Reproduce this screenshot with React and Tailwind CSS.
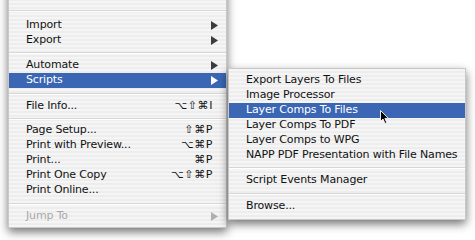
import React from "react";

const stripe =
  "bg-[repeating-linear-gradient(180deg,#f5f5f5_0px,#f5f5f5_2px,#ededed_2px,#ededed_4px)]";

function Arrow({ color = "#3c3c3c" }) {
  return (
    <svg width="7" height="9" viewBox="0 0 7 9" className="block">
      <polygon points="0,0 7,4.5 0,9" fill={color} />
    </svg>
  );
}

function Row({ label, shortcut, arrow, active, disabled, pl = "pl-[17px]", pr = "pr-[8px]" }) {
  const color = active ? "text-white" : disabled ? "text-[#a8a8a8]" : "text-[#111]";
  return (
    <div
      className={`h-[15px] flex items-center ${pl} ${pr} ${color} ${
        active ? "bg-[#3a66b4]" : ""
      }`}
    >
      <span className="flex-1 whitespace-nowrap">{label}</span>
      {shortcut && <span className="whitespace-nowrap tracking-[0.6px]">{shortcut}</span>}
      {arrow && (
        <Arrow color={active ? "#ffffff" : disabled ? "#b0b0b0" : "#3c3c3c"} />
      )}
    </div>
  );
}

function Sep({ h = "h-[10px]" }) {
  return (
    <div className={`${h} flex items-center`}>
      <div className="w-full h-px bg-[#d6d6d6] border-b border-white box-content" />
    </div>
  );
}

export default function App() {
  return (
    <div
      className="relative w-[475px] h-[240px] overflow-hidden bg-white text-[11px] tracking-[-0.15px]"
      style={{ fontFamily: '"DejaVu Sans", "Liberation Sans", sans-serif' }}
    >
      <div
        className={`ml-[8px] mt-[-16px] w-[219px] pt-[4px] pb-[3px] ${stripe} border border-[#c8c8c8] shadow-[0_4px_9px_rgba(0,0,0,0.55)]`}
      >
        <Row label="Place..." disabled />
        <Sep h="h-[14px]" />
        <Row label="Import" arrow />
        <Row label="Export" arrow />
        <Sep />
        <Row label="Automate" arrow />
        <Row label="Scripts" arrow active />
        <Sep h="h-[11px]" />
        <Row label="File Info..." shortcut="⌥⇧⌘I" pr="pr-[13px]" />
        <Sep h="h-[9px]" />
        <Row label="Page Setup..." shortcut="⇧⌘P" pr="pr-[13px]" />
        <Row label="Print with Preview..." shortcut="⌥⌘P" pr="pr-[13px]" />
        <Row label="Print..." shortcut="⌘P" pr="pr-[13px]" />
        <Row label="Print One Copy" shortcut="⌥⇧⌘P" pr="pr-[13px]" />
        <Row label="Print Online..." />
        <Sep h="h-[11px]" />
        <Row label="Jump To" arrow disabled />
      </div>

      <div
        className={`absolute left-[228px] top-[68px] w-[238px] pt-[4px] pb-[5px] ${stripe} border border-[#c8c8c8] shadow-[0_4px_9px_rgba(0,0,0,0.55)]`}
      >
        <Row label="Export Layers To Files" />
        <Row label="Image Processor" />
        <Row label="Layer Comps To Files" active />
        <Row label="Layer Comps To PDF" />
        <Row label="Layer Comps to WPG" />
        <Row label="NAPP PDF Presentation with File Names" />
        <Sep />
        <Row label="Script Events Manager" />
        <Sep h="h-[11px]" />
        <Row label="Browse..." />
      </div>

      <svg
        className="absolute left-[380px] top-[110px]"
        width="10"
        height="15"
        viewBox="0 0 10 15"
      >
        <path
          d="M0.5,0.5 L0.5,11.5 L3,9 L5,13.5 L6.8,12.7 L4.9,8.4 L8.5,8.4 Z"
          fill="#000"
          stroke="#fff"
          strokeWidth="0.9"
        />
      </svg>
    </div>
  );
}
